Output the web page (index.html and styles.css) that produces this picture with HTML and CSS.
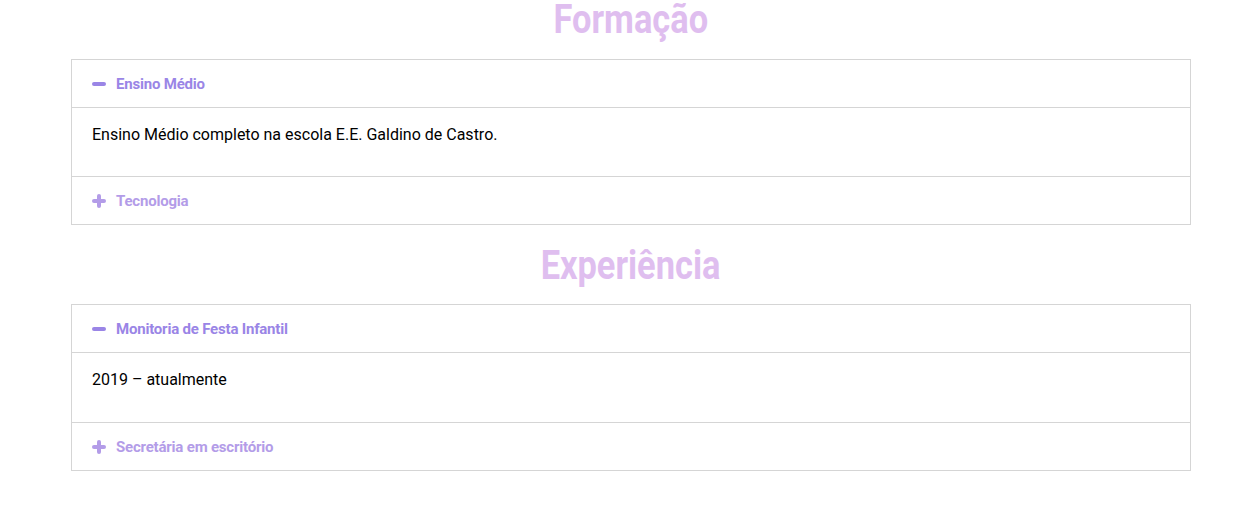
FILE: index.html
```html
<!DOCTYPE html>
<html lang="pt-BR">
<head>
<meta charset="utf-8">
<title>Currículo</title>
<link rel="stylesheet" href="styles.css">
</head>
<body>
<main class="page">
  <section class="section section-first">
    <h2 class="section-title"><span class="title-text">Formação</span></h2>
    <div class="accordion">
      <div class="acc-item open">
        <div class="acc-head">
          <svg class="acc-icon" viewBox="0 0 14 14" width="14" height="14"><rect x="0" y="5" width="14" height="4" rx="2"/></svg>
          <span class="acc-label">Ensino Médio</span>
        </div>
        <div class="acc-body"><p>Ensino Médio completo na escola E.E. Galdino de Castro.</p></div>
      </div>
      <div class="acc-item">
        <div class="acc-head">
          <svg class="acc-icon" viewBox="0 0 14 14" width="14" height="14"><rect x="0" y="5" width="14" height="4" rx="2"/><rect x="5" y="0" width="4" height="14" rx="2"/></svg>
          <span class="acc-label">Tecnologia</span>
        </div>
      </div>
    </div>
  </section>
  <section class="section section-second">
    <h2 class="section-title"><span class="title-text">Experiência</span></h2>
    <div class="accordion">
      <div class="acc-item open">
        <div class="acc-head">
          <svg class="acc-icon" viewBox="0 0 14 14" width="14" height="14"><rect x="0" y="5" width="14" height="4" rx="2"/></svg>
          <span class="acc-label">Monitoria de Festa Infantil</span>
        </div>
        <div class="acc-body acc-body-tall"><p>2019 – atualmente</p></div>
      </div>
      <div class="acc-item">
        <div class="acc-head">
          <svg class="acc-icon" viewBox="0 0 14 14" width="14" height="14"><rect x="0" y="5" width="14" height="4" rx="2"/><rect x="5" y="0" width="4" height="14" rx="2"/></svg>
          <span class="acc-label">Secretária em escritório</span>
        </div>
      </div>
    </div>
  </section>
</main>
</body>
</html>
```
FILE: styles.css
```css
* { box-sizing: border-box; }
html, body { margin: 0; padding: 0; background: #ffffff; }
body { font-family: Roboto, "Liberation Sans", sans-serif; color: #000; }
.page { width: 1120px; margin-left: 71px; }
.section-title {
  margin: 0;
  height: 40px;
  line-height: 40px;
  text-align: center;
  font-family: Roboto, sans-serif;
  font-weight: 700;
  font-size: 40px;
  color: #dfbeef;
}
.title-text { display: inline-block; transform: scaleX(0.86); }
.section-first .section-title { margin-bottom: 19px; }
.section-second .section-title { margin-top: 21px; margin-bottom: 18px; }
.accordion { border: 1px solid #d5d5d5; border-bottom: none; }
.acc-item { border-bottom: 1px solid #d5d5d5; }
.acc-head {
  height: 47px;
  display: flex;
  align-items: center;
  gap: 10px;
  padding-left: 20px;
  font-weight: 700;
  font-size: 15px;
  letter-spacing: -0.2px;
  color: #b39ce8;
}
.acc-item.open .acc-head { color: #9a85e6; border-bottom: 1px solid #d5d5d5; height: 48px; }
.acc-icon { fill: currentColor; flex: none; }
.acc-body { padding: 15px 20px 29px; }
.acc-body-tall { padding-bottom: 30px; }
.acc-body p { margin: 0; font-size: 16px; line-height: 24px; }
```
